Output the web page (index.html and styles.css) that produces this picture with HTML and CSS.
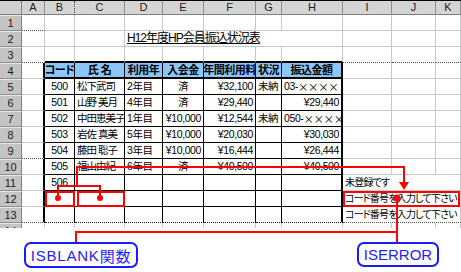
FILE: index.html
```html
<!DOCTYPE html>
<html lang="ja">
<head>
<meta charset="utf-8">
<title>H12年度HP会員振込状況表</title>
<link rel="stylesheet" href="styles.css">
</head>
<body>
<div class="sheet">
  <div class="corner"></div>
  <div class="ch">A</div><div class="ch dv">B</div><div class="ch">C</div><div class="ch">D</div><div class="ch">E</div><div class="ch">F</div><div class="ch">G</div><div class="ch">H</div><div class="ch">I</div><div class="ch">J</div><div class="ch">K</div>

  <div class="rh">1</div>
  <div class="c dt"></div><div class="c"></div><div class="c"></div><div class="c"></div><div class="c"></div><div class="c"></div><div class="c"></div><div class="c"></div><div class="c"></div><div class="c"></div><div class="c"></div>

  <div class="rh">2</div>
  <div class="c"></div><div class="c"></div><div class="c"></div><div class="c title span4"><u>H12年度HP会員振込状況表</u></div><div class="c"></div><div class="c"></div><div class="c"></div><div class="c"></div>

  <div class="rh">3</div>
  <div class="c dt"></div><div class="c tt"></div><div class="c tt"></div><div class="c tt"></div><div class="c tt"></div><div class="c tt"></div><div class="c tt"></div><div class="c tt"></div><div class="c dt"></div><div class="c dt"></div><div class="c dt"></div>

  <div class="rh">4</div>
  <div class="c tl"></div><div class="c t th">コード</div><div class="c t th">氏 名</div><div class="c t th">利用年</div><div class="c t th">入会金</div><div class="c t th">年間利用料</div><div class="c t th">状況</div><div class="c t th tr">振込金額</div><div class="c"></div><div class="c"></div><div class="c"></div>

  <div class="rh">5</div>
  <div class="c tl"></div><div class="c t ce">500</div><div class="c t nm">松下武司</div><div class="c t">2年目</div><div class="c t ce">済</div><div class="c t ri">¥32,100</div><div class="c t">未納</div><div class="c t tr">03-<span class="jp">××××</span></div><div class="c"></div><div class="c"></div><div class="c"></div>

  <div class="rh">6</div>
  <div class="c tl"></div><div class="c t ce">501</div><div class="c t nm">山野 美月</div><div class="c t">4年目</div><div class="c t ce">済</div><div class="c t ri">¥29,440</div><div class="c t"></div><div class="c t tr ri">¥29,440</div><div class="c"></div><div class="c"></div><div class="c"></div>

  <div class="rh">7</div>
  <div class="c tl"></div><div class="c t ce">502</div><div class="c t nm">中田恵美子</div><div class="c t">1年目</div><div class="c t ri">¥10,000</div><div class="c t ri">¥12,544</div><div class="c t">未納</div><div class="c t tr">050-<span class="jp">××××</span></div><div class="c"></div><div class="c"></div><div class="c"></div>

  <div class="rh">8</div>
  <div class="c tl"></div><div class="c t ce">503</div><div class="c t nm">岩佐 真美</div><div class="c t">5年目</div><div class="c t ri">¥10,000</div><div class="c t ri">¥20,030</div><div class="c t"></div><div class="c t tr ri">¥30,030</div><div class="c"></div><div class="c"></div><div class="c"></div>

  <div class="rh">9</div>
  <div class="c tl dt"></div><div class="c t ce">504</div><div class="c t nm">藤田 聡子</div><div class="c t">3年目</div><div class="c t ri">¥10,000</div><div class="c t ri">¥16,444</div><div class="c t"></div><div class="c t tr ri">¥26,444</div><div class="c"></div><div class="c"></div><div class="c"></div>

  <div class="rh">10</div>
  <div class="c tl"></div><div class="c t ce">505</div><div class="c t nm">福山由紀</div><div class="c t">6年目</div><div class="c t ce">済</div><div class="c t ri">¥40,500</div><div class="c t"></div><div class="c t tr ri">¥40,500</div><div class="c"></div><div class="c"></div><div class="c"></div>

  <div class="rh">11</div>
  <div class="c tl"></div><div class="c t ce">506</div><div class="c t"></div><div class="c t"></div><div class="c t"></div><div class="c t"></div><div class="c t"></div><div class="c t tr"></div><div class="c span3 msg">未登録です</div>

  <div class="rh">12</div>
  <div class="c tl"></div><div class="c t"></div><div class="c t"></div><div class="c t"></div><div class="c t"></div><div class="c t"></div><div class="c t"></div><div class="c t tr"></div><div class="c span3 msg">コード番号を入力して下さい</div>

  <div class="rh">13</div>
  <div class="c tl dt"></div><div class="c t dt"></div><div class="c t dt"></div><div class="c t dt"></div><div class="c t dt"></div><div class="c t dt"></div><div class="c t dt"></div><div class="c t tr dt"></div><div class="c span3 msg dt">コード番号を入力して下さい</div>

  <div class="rh">14</div>
  <div class="c"></div><div class="c"></div><div class="c"></div><div class="c"></div><div class="c"></div><div class="c"></div><div class="c"></div><div class="c"></div><div class="c"></div><div class="c"></div><div class="c"></div>
</div>

<div class="notes">
  <div class="note note-blank">ISBLANK<span class="jp">関数</span></div>
  <div class="note note-error">ISERROR</div>
</div>

<svg class="marks" width="461" height="272" viewBox="0 0 461 272" aria-hidden="true">
  <g fill="none" stroke="#ff0000" stroke-width="2">
    <path d="M77 186 V167 H404 V183"/>
    <path d="M58 197 V186 H100 V197"/>
    <rect x="46" y="192" width="28" height="14"/>
    <rect x="78" y="192" width="46" height="14"/>
    <rect x="344" y="192" width="115" height="14"/>
    <path d="M397 198 V242"/>
    <path d="M76 242 V232 H397"/>
  </g>
  <g fill="#ff0000">
    <polygon points="399,182 409,182 404,190"/>
    <circle cx="58" cy="198" r="3"/>
    <circle cx="100" cy="198" r="3"/>
    <circle cx="397" cy="198" r="3.5"/>
  </g>
</svg>
</body>
</html>
```
FILE: styles.css
```css
* {
  box-sizing: border-box;
}

html,
body {
  margin: 0;
  padding: 0;
  background: #ffffff;
}

body {
  position: relative;
  width: 461px;
  height: 272px;
  overflow: hidden;
  font-family: "Liberation Sans", "Noto Sans CJK JP", sans-serif;
  color: #000;
}

.sheet {
  display: grid;
  grid-template-columns: 22px 23px 30px 50px 38px 41px 52px 26px 61px 49px 44px 25px;
  grid-template-rows: 14px repeat(14, 16px);
  height: 228px;
  overflow: hidden;
  border-top: 1px solid #000;
  font-feature-settings: "palt";
}

.corner {
  background: #d0d0d0;
  border-right: 1px solid #808080;
  border-bottom: 1px solid #808080;
}

.ch {
  background: #d4d4d4;
  border-right: 1px solid #909090;
  border-bottom: 1px solid #808080;
  font-size: 11px;
  line-height: 13px;
  text-align: center;
  color: #222;
}

.ch.dv {
  border-right: 1px dotted #404040;
}

.rh {
  background: #c4c4c4;
  border-top: 1px solid #e8e8e8;
  border-right: 1px solid #808080;
  border-bottom: 1px solid #909090;
  font-size: 11px;
  line-height: 14px;
  text-align: center;
  color: #222;
}

.c {
  display: flex;
  align-items: flex-end;
  padding: 0 2px 2px 2px;
  border-right: 1px solid #c8c8c8;
  border-bottom: 1px solid #c8c8c8;
  font-size: 10.5px;
  line-height: 11px;
  letter-spacing: -0.4px;
  white-space: nowrap;
  overflow: hidden;
}

.dt {
  border-bottom: 1px dotted #505050;
}

.t {
  border-right: 1px solid #000;
  border-bottom: 1px solid #000;
}

.t.dt {
  border-bottom: 1px dotted #202020;
}

.tl {
  border-right: 2px solid #000;
}

.tr {
  border-right: 2px solid #000;
}

.tt {
  border-bottom: 2px solid #000;
}

.th {
  justify-content: center;
  background: #8cc6fb;
  font-weight: bold;
  font-size: 11px;
  letter-spacing: -0.5px;
  border-bottom: 2px solid #000;
  padding: 0 0 1px 0;
}

.th.tr {
  border-right: 2px solid #000;
}

.ce {
  justify-content: center;
}

.ri {
  justify-content: flex-end;
}

.nm {
  letter-spacing: -1px;
}

.msg {
  font-size: 10px;
  letter-spacing: -0.8px;
}

.title {
  font-size: 12px;
  letter-spacing: -1px;
  padding-bottom: 2px;
  border-right: none;
  border-bottom: 1px solid #c8c8c8;
}

.span4 {
  grid-column: span 4;
}

.span3 {
  grid-column: span 3;
  padding-left: 2px;
}

.jp {
  font-family: "Noto Sans CJK JP", sans-serif;
}

.notes {
  display: flex;
  justify-content: space-between;
  align-items: flex-start;
  padding: 14px 22px 0 24px;
}

.note {
  display: flex;
  align-items: center;
  justify-content: center;
  border: 2px solid #1a1aff;
  border-radius: 7px;
  color: #2a1aff;
  font-size: 15px;
  background: #fff;
}

.note-blank {
  width: 114px;
  height: 26px;
  letter-spacing: 0.8px;
}

.note-error {
  width: 82px;
  height: 25px;
}

.marks {
  position: absolute;
  left: 0;
  top: 0;
  pointer-events: none;
}
```
